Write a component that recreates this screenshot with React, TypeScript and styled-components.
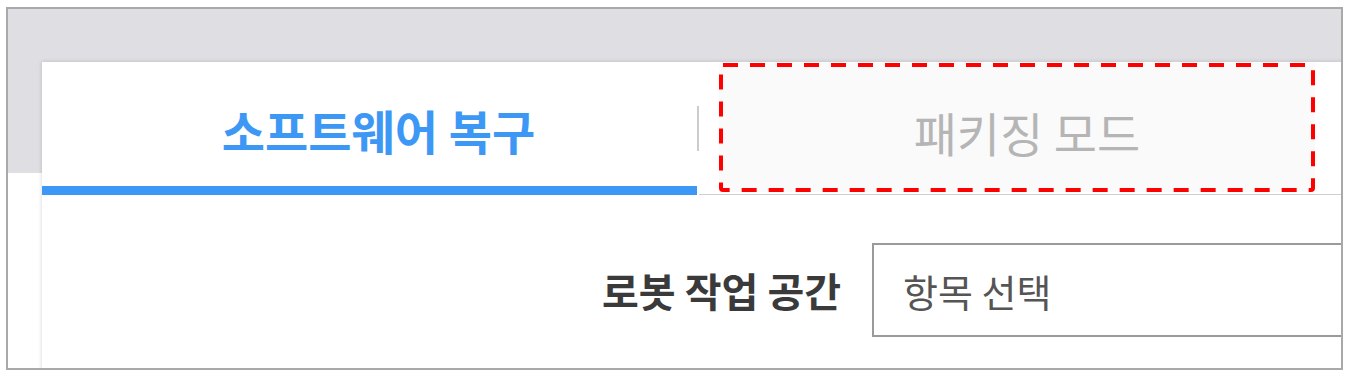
import React from "react";
import styled, { createGlobalStyle } from "styled-components";

const Global = createGlobalStyle`
  html, body { margin: 0; padding: 0; background: #ffffff; }
  body { font-family: "Noto Sans CJK KR", "Noto Sans", sans-serif; }
  * { box-sizing: border-box; }
`;

const Frame = styled.div`
  margin: 7px 0 0 6px;
  width: 1337px;
  height: 363px;
  border: 2px solid #a9a9a9;
  background: linear-gradient(#dfdfe3 0, #dfdfe3 164px, #ffffff 164px);
  overflow: hidden;
  padding: 53px 0 0 34px;
`;

const Panel = styled.div`
  width: 1320px;
  height: 400px;
  background: #ffffff;
  box-shadow: 0 0 4px rgba(0, 0, 0, 0.18);
  display: flex;
  flex-direction: column;
`;

const TabBar = styled.div`
  display: flex;
  height: 133px;
`;

const Tab = styled.div<{ $width: number }>`
  width: ${(p) => p.$width}px;
  flex: none;
  display: flex;
  align-items: center;
  justify-content: center;
  border-bottom: 9px solid #3d97f5;
`;

const ActiveLabel = styled.span`
  font-size: 47px;
  font-weight: 700;
  color: #3d97f5;
  margin-left: 18px;
  margin-top: 10px;
  white-space: nowrap;
`;

const Divider = styled.span`
  width: 2px;
  height: 45px;
  background: #cccccc;
  flex: none;
  align-self: center;
`;

const InactiveTab = styled.div`
  flex: 1;
  display: flex;
  align-items: flex-start;
  padding: 1px 0 0 20px;
  border-bottom: 1px solid #cfcfcf;
`;

const TabFace = styled.div`
  position: relative;
  width: 596px;
  height: 129px;
  background: #fafafa;
  display: flex;
  align-items: center;
  justify-content: center;
`;

const DashOverlay = styled.svg`
  position: absolute;
  inset: 0;
  pointer-events: none;
`;

const InactiveLabel = styled.span`
  font-size: 47px;
  font-weight: 400;
  color: #b5b5b5;
  margin-left: 20px;
  margin-top: 8px;
  white-space: nowrap;
`;

const FormRow = styled.div`
  display: flex;
  align-items: center;
  padding: 48px 0 0 0;
`;

const FieldLabel = styled.label`
  width: 799px;
  flex: none;
  text-align: right;
  font-size: 40px;
  font-weight: 700;
  color: #3a3a3a;
  white-space: nowrap;
`;

const SelectBox = styled.div`
  margin-left: 31px;
  width: 600px;
  height: 94px;
  border: 2px solid #9a9a9a;
  display: flex;
  align-items: center;
  padding-left: 29px;
  font-size: 38px;
  color: #555555;
  white-space: nowrap;
`;

export default function App() {
  return (
    <>
      <Global />
      <Frame>
        <Panel>
          <TabBar>
            <Tab $width={655}>
              <ActiveLabel>소프트웨어 복구</ActiveLabel>
            </Tab>
            <Divider />
            <InactiveTab>
              <TabFace>
                <DashOverlay width="596" height="129" viewBox="0 0 596 129">
                  <rect
                    x="2"
                    y="2"
                    width="592"
                    height="125"
                    rx="2"
                    fill="none"
                    stroke="#ff0000"
                    strokeWidth="4"
                    strokeDasharray="15 12"
                  />
                </DashOverlay>
                <InactiveLabel>패키징 모드</InactiveLabel>
              </TabFace>
            </InactiveTab>
          </TabBar>
          <FormRow>
            <FieldLabel>로봇 작업 공간</FieldLabel>
            <SelectBox>항목 선택</SelectBox>
          </FormRow>
        </Panel>
      </Frame>
    </>
  );
}
